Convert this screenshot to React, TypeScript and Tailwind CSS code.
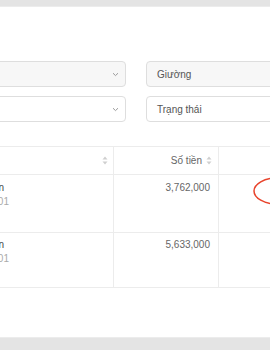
import React from "react";

function Chevron() {
  return (
    <svg width="7" height="5" viewBox="0 0 7 5" className="shrink-0">
      <path d="M1 1.2 L3.5 3.6 L6 1.2" fill="none" stroke="#9a9a9a" strokeWidth="1" />
    </svg>
  );
}

function SortIcon() {
  return (
    <svg width="6" height="9" viewBox="0 0 6 9" className="shrink-0">
      <path d="M3 0.5 L5.5 3.5 L0.5 3.5 Z" fill="#cfcfcf" />
      <path d="M3 8.5 L5.5 5.5 L0.5 5.5 Z" fill="#cfcfcf" />
    </svg>
  );
}

function Select({ text, bg, chevron }: { text?: string; bg: string; chevron?: boolean }) {
  return (
    <div
      className={`w-[136px] h-[26px] shrink-0 rounded-[4px] border border-[#dedede] flex items-center justify-between pl-[10px] pr-[6px] text-[10px] text-[#555555] ${bg}`}
    >
      <span className="whitespace-nowrap">{text ?? ""}</span>
      {chevron ? <Chevron /> : null}
    </div>
  );
}

function Row({ h, pt, name, code, amount }: { h: string; pt: string; name: string; code: string; amount: string }) {
  return (
    <div className={`flex border-b border-[#ececec] ${h}`}>
      <div className={`w-[114px] shrink-0 border-r border-[#ececec] ${pt}`}>
        <div className="w-[4px] flex justify-end whitespace-nowrap text-[10px] leading-[14px] text-[#444444]">{name}</div>
        <div className="w-[9px] flex justify-end whitespace-nowrap text-[10px] leading-[14px] text-[#aaaaaa]">{code}</div>
      </div>
      <div className={`w-[105px] shrink-0 border-r border-[#ececec] pr-[8px] text-right ${pt}`}>
        <div className="text-[10px] leading-[14px] text-[#666666]">{amount}</div>
      </div>
      <div className="flex-1" />
    </div>
  );
}

export default function App() {
  return (
    <div className="w-[270px] h-[350px] overflow-hidden bg-[#e4e4e4] flex flex-col font-['Liberation_Sans',Arial,sans-serif]">
      <div className="h-[6px] shrink-0" />
      <div className="h-[332px] shrink-0 bg-white border-y border-[#ececec] relative overflow-hidden pt-[54px]">
        <div className="flex gap-[20px] ml-[-10px]">
          <Select bg="bg-[#f7f7f7]" chevron />
          <Select bg="bg-[#f7f7f7]" text="Giường" />
        </div>
        <div className="flex gap-[20px] ml-[-10px] mt-[9px]">
          <Select bg="bg-white" chevron />
          <Select bg="bg-white" text="Trạng thái" />
        </div>

        <div className="mt-[24px] border-t border-[#ececec]">
          <div className="flex h-[28px] border-b border-[#ececec]">
            <div className="w-[114px] shrink-0 border-r border-[#ececec] flex items-center justify-end pr-[5px]">
              <SortIcon />
            </div>
            <div className="w-[105px] shrink-0 border-r border-[#ececec] flex items-center justify-end gap-[4px] pr-[6px] text-[10px] text-[#666666]">
              <span>Số tiền</span>
              <SortIcon />
            </div>
            <div className="flex-1" />
          </div>
          <Row h="h-[58px]" pt="pt-[6px]" name="Nguyễn Văn An" code="HD0001" amount="3,762,000" />
          <Row h="h-[55px]" pt="pt-[5px]" name="Trần Thị Lan" code="HD0001" amount="5,633,000" />
        </div>

        <svg className="absolute left-[253px] top-[169px]" width="50" height="30" viewBox="0 0 50 30">
          <ellipse cx="24" cy="15" rx="23" ry="13" fill="none" stroke="#e8432b" strokeWidth="1.5" />
        </svg>
      </div>
      <div className="flex-1" />
    </div>
  );
}
